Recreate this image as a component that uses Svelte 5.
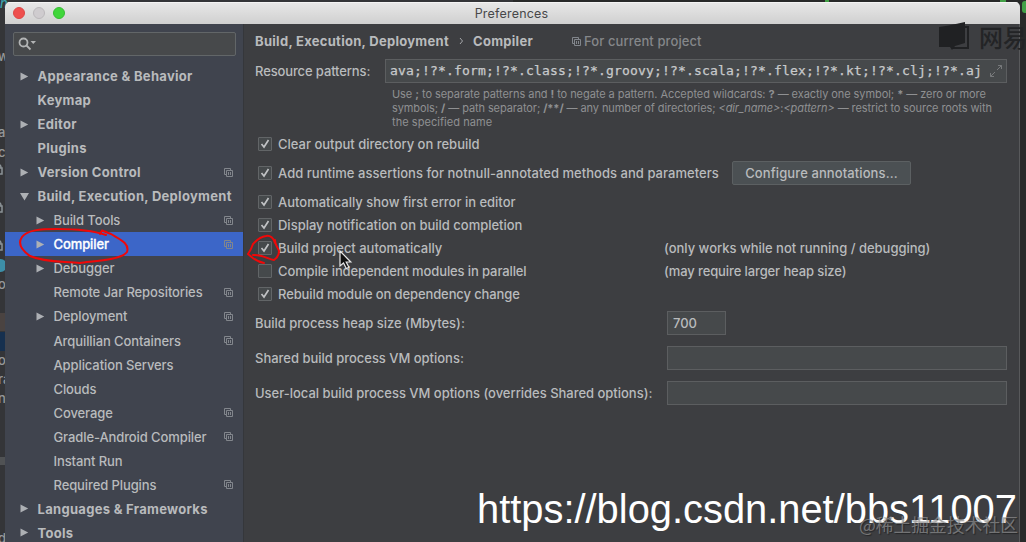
<script lang="ts">
  interface TreeItem {
    label: string;
    level: number;
    state?: "open" | "closed";
    project?: boolean;
    selected?: boolean;
  }

  interface Option {
    label: string;
    checked: boolean;
    button?: string;
    note?: string;
    tight?: boolean;
  }

  const tree: TreeItem[] = [
    { label: "Appearance & Behavior", level: 0, state: "closed" },
    { label: "Keymap", level: 0 },
    { label: "Editor", level: 0, state: "closed" },
    { label: "Plugins", level: 0 },
    { label: "Version Control", level: 0, state: "closed", project: true },
    { label: "Build, Execution, Deployment", level: 0, state: "open" },
    { label: "Build Tools", level: 1, state: "closed", project: true },
    { label: "Compiler", level: 1, state: "closed", project: true, selected: true },
    { label: "Debugger", level: 1, state: "closed" },
    { label: "Remote Jar Repositories", level: 1, project: true },
    { label: "Deployment", level: 1, state: "closed", project: true },
    { label: "Arquillian Containers", level: 1, project: true },
    { label: "Application Servers", level: 1 },
    { label: "Clouds", level: 1 },
    { label: "Coverage", level: 1, project: true },
    { label: "Gradle-Android Compiler", level: 1, project: true },
    { label: "Instant Run", level: 1 },
    { label: "Required Plugins", level: 1, project: true },
    { label: "Languages & Frameworks", level: 0, state: "closed" },
    { label: "Tools", level: 0, state: "closed" },
  ];

  const options: Option[] = [
    { label: "Clear output directory on rebuild", checked: true },
    { label: "Add runtime assertions for notnull-annotated methods and parameters", checked: true, button: "Configure annotations..." },
    { label: "Automatically show first error in editor", checked: true },
    { label: "Display notification on build completion", checked: true },
    { label: "Build project automatically", checked: true, note: "(only works while not running / debugging)" },
    { label: "Compile independent modules in parallel", checked: false, note: "(may require larger heap size)", tight: true },
    { label: "Rebuild module on dependency change", checked: true, tight: true },
  ];

  const patterns = "ava;!?*.form;!?*.class;!?*.groovy;!?*.scala;!?*.flex;!?*.kt;!?*.clj;!?*.aj";

  // slices of the editor that stay visible left of the dialog
  const behind = [
    { y: 48, text: "w" },
    { y: 124, text: "a" },
    { y: 144, text: "c" },
    { y: 276, text: "o" },
    { y: 352, text: "o" },
    { y: 371, text: "ra" },
    { y: 390, text: "n" },
    { y: 530, text: "d" },
  ];
  const locks = [170, 208, 246];
</script>

{#snippet projectIcon()}
  <svg class="project-icon" width="11" height="11" viewBox="0 0 11 11">
    <path d="M3 7.5H1.5v-6h6V3" />
    <path d="M3.5 3.5h6v6h-6z" />
    <path d="M5.5 5v3M7.5 5v3" />
  </svg>
{/snippet}

<div class="screen">
  <div class="backdrop">
    <span class="tag">n</span>
    {#each behind as b}
      <span style={`top:${b.y}px`}>{b.text}</span>
    {/each}
    {#each locks as y}
      <svg class="lock" style={`top:${y - 8}px`} width="6" height="14" viewBox="0 0 6 14">
        <path d="M0 6h4v6H0M0 3.5c2-1.5 3 0 3 2.5" />
      </svg>
    {/each}
    <i class="dot"></i>
    <i class="brown"></i>
    <i class="navy"></i>
    <i class="scroll"></i>
    <i class="green g1"></i>
    <i class="green g2"></i>
    <i class="green g3"></i>
  </div>

  <div class="window">
    <header>
      <i class="light red"></i>
      <i class="light gray"></i>
      <i class="light lime"></i>
      <h1>Preferences</h1>
    </header>

    <div class="body">
      <aside>
        <div class="search">
          <svg width="20" height="14" viewBox="0 0 20 14">
            <circle cx="5.5" cy="5.5" r="4" />
            <path class="handle" d="M8.5 8.5l4 4" />
            <path class="arrow" d="M12.5 4h5.5l-2.75 3z" />
          </svg>
        </div>
        <ul>
          {#each tree as item}
            <li class:child={item.level === 1} class:selected={item.selected}>
              <svg class="toggle" width="9" height="9" viewBox="0 0 9 9">
                {#if item.state === "closed"}
                  <path d="M.5.5L8.2 4.5.5 8.5z" />
                {:else if item.state === "open"}
                  <path d="M0 1h9L4.5 8.5z" />
                {/if}
              </svg>
              <span>{item.label}</span>
              {#if item.project}{@render projectIcon()}{/if}
            </li>
          {/each}
        </ul>
      </aside>

      <main>
        <div class="crumbs">
          <b>Build, Execution, Deployment</b>
          <svg width="5" height="8" viewBox="0 0 5 8"><path d="M1 1l2.5 3L1 7" /></svg>
          <b>Compiler</b>
          <div class="scope">{@render projectIcon()}<span>For current project</span></div>
        </div>

        <div class="resource">
          <span>Resource patterns:</span>
          <div class="field mono">
            <span>{patterns}</span>
            <svg width="14" height="14" viewBox="0 0 14 14">
              <path d="M8 6l4.5-4.5M9 1.5h3.5V5M6 8l-4.5 4.5M1.5 9v3.5H5" />
            </svg>
          </div>
        </div>

        <div class="hint">
          <p>Use <b>;</b> to separate patterns and <b>!</b> to negate a pattern. Accepted wildcards: <b>?</b> — exactly one symbol; <b>*</b> — zero or more</p>
          <p class="second">symbols; <b>/</b> — path separator; <b>/**/</b> — any number of directories; <em>&lt;dir_name&gt;</em>:<em>&lt;pattern&gt;</em> — restrict to source roots with</p>
          <p class="last">the specified name</p>
        </div>

        <div class="options">
          {#each options as o}
            <div class="option" class:tall={o.button} class:tight={o.tight}>
              <span class="box">
                {#if o.checked}
                  <svg width="14" height="14" viewBox="0 0 14 14"><path d="M3.5 7l2.500 3 4.500-7" /></svg>
                {/if}
              </span>
              <span class="name">{o.label}</span>
              {#if o.button}<button>{o.button}</button>{/if}
              {#if o.note}<span>{o.note}</span>{/if}
            </div>
          {/each}
        </div>

        <div class="form">
          <div class="line"><span>Build process heap size (Mbytes):</span><div class="field small">700</div></div>
          <div class="line"><span>Shared build process VM options:</span><div class="field"></div></div>
          <div class="line"><span>User-local build process VM options (overrides Shared options):</span><div class="field"></div></div>
        </div>
      </main>
    </div>
  </div>

  <!-- hand-drawn marks and pointer over the dialog -->
  <svg class="marks" width="1026" height="542" viewBox="0 0 1026 542">
    <path class="ink" d="M106 235C94 231 74 229 57 229C40 229 27 230 22 237C17 244 23 251 30 256C46 263 65 261 80 263C94 261 121 260 127 252C130 243 119 239 111 234L102 230.500L100 234" />
    <path class="ink" d="M275 243C274 238 270 235 266 236C259 237 256 241 253 244Q251 250 248 254C253 258 256 262 264 263M253 255C261 254 268 259 274 260C277 258 279 255 279 251C278 247 275 246 275 240" />
    <path class="pointer" d="M340 251v15l3.500-3 2.800 5.500 2.600-1.300-2.700-5.200h4.600z" />
  </svg>

  <div class="netease">
    <svg width="32" height="30" viewBox="0 0 32 30">
      <path class="frame" d="M26 6h4v21H14" />
      <path d="M1 6Q10 5 27 1v21l-10 3-3 4-2-3H1z" />
    </svg>
    <span>网易</span>
  </div>
  <div class="url">https://blog.csdn.net/bbs11007</div>
  <div class="juejin">@稀土掘金技术社区</div>
</div>

<style>
  :global(body) {
    margin: 0;
    background: #2b2b2b;
  }
  .screen {
    position: relative;
    width: 1026px;
    height: 542px;
    overflow: hidden;
    background: #2b2b2c;
    font: 500 13px/16px Inter, "Liberation Sans", sans-serif;
    color: #b9bbbd;
  }
  .backdrop {
    position: absolute;
    inset: 0;
    background: linear-gradient(90deg, #343538 0 50%, #292a2a 50%);
    color: #96989a;
  }
  .backdrop span,
  .backdrop i,
  .backdrop svg {
    position: absolute;
    left: -2px;
  }
  .backdrop .tag {
    left: 0;
    top: -5px;
    color: #3ba1ad;
    font-style: italic;
  }
  .lock path {
    fill: none;
    stroke: #8b9296;
    stroke-width: 1.5;
  }
  .backdrop .dot {
    left: -6px;
    top: 259px;
    width: 13px;
    height: 13px;
    border-radius: 50%;
    background: #3d8fa8;
  }
  .backdrop .brown {
    top: 313px;
    width: 8px;
    height: 18px;
    background: #4a4341;
  }
  .backdrop .navy {
    top: 332px;
    width: 8px;
    height: 19px;
    background: #16304f;
  }
  .backdrop .scroll {
    top: 457px;
    width: 8px;
    height: 8px;
    background: #505254;
  }
  .backdrop .green {
    top: 0;
    left: 825px;
    width: 4px;
    height: 2px;
    background: #43a047;
  }
  .backdrop .g2 {
    left: 1000px;
    width: 6px;
  }
  .backdrop .g3 {
    left: 1022px;
    top: 1px;
    width: 6px;
    height: 12px;
    border-radius: 4px;
  }
  .window {
    position: relative;
    margin-left: 5px;
    top: 2px;
    width: 1015px;
    height: 540px;
    display: flex;
    flex-direction: column;
    border-radius: 5px 5px 0 0;
    overflow: hidden;
    background: #3d3e41;
    box-shadow: inset -1px 0 #58595b;
  }
  header {
    flex: none;
    height: 22px;
    display: flex;
    align-items: center;
    padding-left: 8px;
    gap: 8px;
    background: linear-gradient(#e8e8e8, #d0d0d0);
    box-shadow: inset 0 1px #f4f4f4;
    color: #48484a;
  }
  .light {
    width: 12px;
    height: 12px;
    border-radius: 50%;
    box-sizing: border-box;
  }
  .red {
    background: #ee4f4e;
    border: 1px solid #dc4746;
  }
  .gray {
    background: #cfcccf;
    border: 1px solid #bbb8bb;
  }
  .lime {
    background: #40d63b;
    border: 1px solid #36bd33;
  }
  h1 {
    flex: 1;
    margin: 2px 70px 0 0;
    text-align: center;
    font-size: 12.5px;
    font-weight: 400;
    letter-spacing: 0.2px;
  }
  .body {
    flex: 1;
    display: flex;
    min-height: 0;
  }
  aside {
    flex: none;
    width: 239px;
    background: #40444e;
    border-right: 1px solid #35373b;
    box-sizing: border-box;
  }
  .search {
    height: 24px;
    margin: 8px 7px 8px 8px;
    padding: 4px;
    box-sizing: border-box;
    border: 1px solid #626668;
    border-radius: 2px;
    background: #47494b;
  }
  .search svg {
    display: block;
  }
  .search circle,
  .handle {
    fill: none;
    stroke: #b2b4b5;
    stroke-width: 1.8;
  }
  .arrow {
    fill: #b2b4b5;
  }
  ul {
    margin: 0;
    padding: 0;
    list-style: none;
  }
  li {
    height: 24.05px;
    display: flex;
    align-items: center;
    padding: 0 9px 0 15px;
    font-weight: 700;
    letter-spacing: 0.3px;
    white-space: nowrap;
  }
  li span {
    margin-left: 8.5px;
  }
  li.child {
    padding-left: 31px;
    font-weight: 500;
    letter-spacing: -0.1px;
  }
  .selected {
    background: #3c66c8;
    color: #fff;
  }
  li.selected {
    -webkit-text-stroke: 0.3px #fff;
  }
  .toggle {
    flex: none;
    fill: #adb0b4;
  }
  .project-icon {
    flex: none;
    fill: none;
    stroke: #82868c;
    stroke-width: 1;
  }
  li .project-icon {
    margin-left: auto;
  }
  main {
    flex: 1;
    padding: 8px 13px 0 11px;
    min-width: 0;
  }
  .crumbs {
    display: flex;
    align-items: center;
    height: 18px;
    letter-spacing: 0.29px;
    white-space: nowrap;
  }
  .crumbs > svg {
    margin: 0 9px 0 10px;
    fill: none;
    stroke: #a5a7a9;
  }
  .scope {
    display: flex;
    align-items: center;
    gap: 2px;
    margin-left: 38px;
    color: #85878a;
    letter-spacing: 0.1px;
  }
  .resource {
    display: flex;
    align-items: center;
    height: 24px;
    margin-top: 9px;
  }
  .resource > span {
    width: 130px;
    letter-spacing: -0.12px;
  }
  .field {
    flex: 1;
    box-sizing: border-box;
    height: 24px;
    border: 1px solid #5c5e60;
    background: #46494b;
  }
  .mono {
    display: flex;
    align-items: center;
    justify-content: space-between;
    padding: 0 3px 0 4px;
    font: 13px/16px "DejaVu Sans Mono", monospace;
    letter-spacing: 0.175px;
    color: #c8cacc;
    -webkit-text-stroke: 0.25px #c8cacc;
    white-space: pre;
  }
  .mono svg {
    fill: none;
    stroke: #77797b;
  }
  .hint {
    margin: 4px 0 0 137px;
    height: 45px;
    font-size: 11px;
    line-height: 14px;
    font-weight: 400;
    letter-spacing: -0.067px;
    color: #8f9092;
    white-space: nowrap;
  }
  .second {
    letter-spacing: -0.09px;
  }
  .last {
    letter-spacing: 0.05px;
  }
  p {
    margin: 0;
  }
  .option {
    display: flex;
    align-items: center;
    height: 23px;
    padding-left: 3px;
    letter-spacing: -0.01px;
    white-space: nowrap;
  }
  .option.tight {
    letter-spacing: -0.11px;
  }
  .option.tall {
    height: 35px;
    letter-spacing: 0.03px;
  }
  .box {
    flex: none;
    width: 14px;
    height: 14px;
    box-sizing: border-box;
    border: 1px solid #626567;
    border-radius: 1px;
    background: #45494b;
  }
  .box svg {
    display: block;
    margin: -1px;
    fill: none;
    stroke: #c0c2c4;
    stroke-width: 1.7;
  }
  .name {
    width: 386px;
    margin-left: 6px;
  }
  .tall .name {
    width: 454px;
  }
  button {
    width: 179px;
    height: 24px;
    padding: 0;
    border: 1px solid #5c6062;
    border-radius: 2px;
    background: #4b5053;
    color: inherit;
    font: inherit;
    letter-spacing: 0.1px;
  }
  .form {
    display: flex;
    flex-direction: column;
    gap: 11px;
    margin-top: 6px;
  }
  .line {
    display: flex;
    align-items: center;
    letter-spacing: -0.02px;
    white-space: nowrap;
  }
  .line span {
    width: 412px;
  }
  .small {
    flex: none;
    width: 59px;
    padding: 3px 5px;
  }
  .marks {
    position: absolute;
    left: 0;
    top: 0;
  }
  .ink {
    fill: none;
    stroke: #f00808;
    stroke-width: 2;
    stroke-linecap: round;
    stroke-linejoin: round;
  }
  .pointer {
    fill: #111;
    stroke: #e8e8e8;
    stroke-width: 1.2;
  }
  .netease {
    position: absolute;
    left: 938px;
    top: 21px;
    display: flex;
    gap: 9px;
    color: #232426;
    font: 500 24px/32px "Noto Sans CJK SC", sans-serif;
    white-space: nowrap;
  }
  .netease path {
    fill: #202123;
  }
  .netease .frame {
    fill: none;
    stroke: #202123;
    stroke-width: 2;
  }
  .url {
    position: absolute;
    left: 477px;
    top: 486px;
    color: #fff;
    font: 41px/47px "Liberation Sans", Arial, sans-serif;
    transform: scaleX(0.972);
    transform-origin: left;
    white-space: nowrap;
  }
  .juejin {
    position: absolute;
    right: 8px;
    top: 512px;
    color: rgba(160, 160, 160, 0.6);
    font: 17.8px/24px "Noto Sans CJK SC", sans-serif;
    text-shadow: 1px 1px 1px rgba(0, 0, 0, 0.4);
    white-space: nowrap;
  }
</style>
